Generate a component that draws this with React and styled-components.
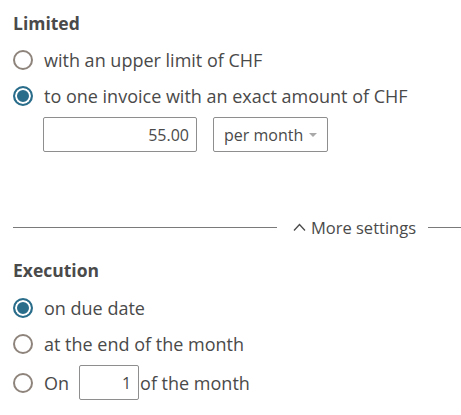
import React, { useState } from "react";
import styled, { createGlobalStyle } from "styled-components";

const GlobalStyle = createGlobalStyle`
  body {
    margin: 0;
    background: #ffffff;
    font-family: "Open Sans", "Noto Sans", sans-serif;
    color: #4a4a4a;
  }
`;

const Page = styled.div`
  width: 461px;
  padding-left: 13px;
  box-sizing: border-box;
  overflow: hidden;
`;

const Heading = styled.div`
  font-size: 17.5px;
  font-weight: 700;
  line-height: 24px;
  color: #4a4a4a;
  margin-top: ${(p) => p.$top}px;
`;

const Options = styled.div`
  display: flex;
  flex-direction: column;
  margin-top: ${(p) => p.$top || 0}px;
`;

const Row = styled.label`
  display: flex;
  align-items: center;
  height: ${(p) => p.$h || 36}px;
  margin-top: ${(p) => p.$top || 0}px;
  font-size: 18px;
  line-height: 24px;
  cursor: pointer;
`;

const Radio = styled.span`
  width: 20px;
  height: 20px;
  box-sizing: border-box;
  border-radius: 50%;
  margin-right: 11px;
  flex: none;
  border: ${(p) => (p.$on ? "2px solid #2a6d8b" : "2px solid #8e847c")};
  background: ${(p) => (p.$on ? "#2a6d8b" : "#fff")};
  box-shadow: ${(p) => (p.$on ? "inset 0 0 0 2px #fff" : "none")};
`;

const Fields = styled.div`
  display: flex;
  gap: 16px;
  margin: 3px 0 0 30px;
`;

const Field = styled.input`
  width: ${(p) => p.$w}px;
  height: 35px;
  box-sizing: border-box;
  border: 1px solid #8e8e8e;
  border-radius: 2px;
  padding: 0 7px;
  text-align: right;
  font-family: "Open Sans", "Noto Sans", sans-serif;
  font-size: 16px;
  color: #4a4a4a;
  background: #fff;
  outline: none;
`;

const Select = styled.div`
  width: 115px;
  height: 35px;
  box-sizing: border-box;
  border: 1px solid #8e8e8e;
  border-radius: 2px;
  padding: 0 10px;
  display: flex;
  align-items: center;
  justify-content: space-between;
  font-size: 16px;
`;

const Caret = styled.span`
  width: 0;
  height: 0;
  border-left: 4px solid transparent;
  border-right: 4px solid transparent;
  border-top: 4px solid #a9a9a9;
  margin-top: 1px;
`;

const Divider = styled.div`
  display: flex;
  align-items: center;
  margin-top: 63px;
  height: 24px;
`;

const Line = styled.span`
  height: 1px;
  background: #7a7a7a;
  flex: ${(p) => (p.$grow ? 1 : "none")};
  width: ${(p) => (p.$grow ? "auto" : "33px")};
`;

const Toggle = styled.button`
  display: flex;
  align-items: center;
  gap: 5px;
  margin: 0 12px 0 16px;
  padding: 0;
  border: 0;
  background: none;
  font-family: "Open Sans", "Noto Sans", sans-serif;
  font-size: 16.5px;
  color: #4a4a4a;
  cursor: pointer;
`;

const DayField = styled(Field)`
  margin: 0 1px 0 10px;
`;

export default function App() {
  const [limit, setLimit] = useState("exact");
  const [exec, setExec] = useState("due");

  return (
    <Page>
      <GlobalStyle />
      <Heading $top={11}>Limited</Heading>
      <Options $top={7}>
        <Row onClick={() => setLimit("upper")}>
          <Radio $on={limit === "upper"} />
          with an upper limit of CHF
        </Row>
        <Row onClick={() => setLimit("exact")}>
          <Radio $on={limit === "exact"} />
          to one invoice with an exact amount of CHF
        </Row>
      </Options>
      <Fields>
        <Field $w={154} defaultValue="55.00" />
        <Select>
          per month
          <Caret />
        </Select>
      </Fields>
      <Divider>
        <Line $grow />
        <Toggle>
          <svg width="13" height="8" viewBox="0 0 13 8" fill="none">
            <path d="M1 7.5 6.5 1.5 12 7.5" stroke="#4a4a4a" strokeWidth="1.3" />
          </svg>
          More settings
        </Toggle>
        <Line />
      </Divider>
      <Heading $top={19}>Execution</Heading>
      <Options $top={8}>
        <Row onClick={() => setExec("due")}>
          <Radio $on={exec === "due"} />
          on due date
        </Row>
        <Row onClick={() => setExec("end")}>
          <Radio $on={exec === "end"} />
          at the end of the month
        </Row>
        <Row $h={35} $top={3} onClick={() => setExec("on")}>
          <Radio $on={exec === "on"} />
          On
          <DayField $w={60} defaultValue="1" />
          of the month
        </Row>
      </Options>
    </Page>
  );
}
